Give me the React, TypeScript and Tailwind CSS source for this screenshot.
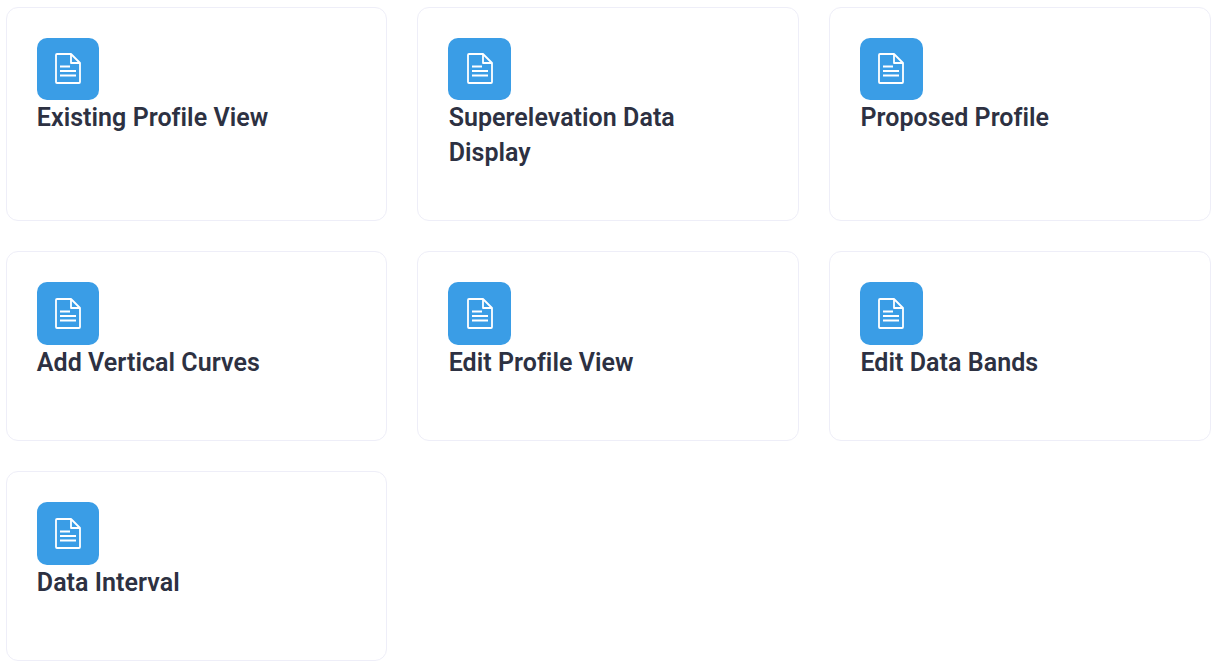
const cards = [
  "Existing Profile View",
  "Superelevation Data Display",
  "Proposed Profile",
  "Add Vertical Curves",
  "Edit Profile View",
  "Edit Data Bands",
  "Data Interval",
];

function DocIcon() {
  return (
    <svg viewBox="0 0 26 31" className="h-[31px] w-[26px]" fill="none" stroke="white" strokeWidth="1.8" strokeLinejoin="round">
      <path d="M2 1h14l9 9v19a1 1 0 0 1-1 1H2a1 1 0 0 1-1-1V2a1 1 0 0 1 1-1z" />
      <path d="M16 1v9h9" />
      <path d="M5 13.5h10M5 18h16M5 22.5h16" />
    </svg>
  );
}

function Card({ title }: { title: string }) {
  return (
    <div className="min-h-[190px] rounded-xl border border-[#eeeef8] bg-white pt-[30px] pr-[30px] pb-[50px] pl-[30px]">
      <div className="flex h-[62.5px] w-[62.5px] items-center justify-center rounded-[10px] bg-[#3a9de6]">
        <DocIcon />
      </div>
      <h3 className="pr-10 pl-[0.3px] text-[25px] leading-[35px] font-semibold tracking-[0.05px] text-[#2d3142]">{title}</h3>
    </div>
  );
}

export default function App() {
  return (
    <div className="bg-white pt-[6.7px] pr-[6px] pl-[5.5px] font-['Roboto',sans-serif]">
      <div className="grid grid-cols-3 gap-[30px]">
        {cards.map((title) => (
          <Card key={title} title={title} />
        ))}
      </div>
    </div>
  );
}
